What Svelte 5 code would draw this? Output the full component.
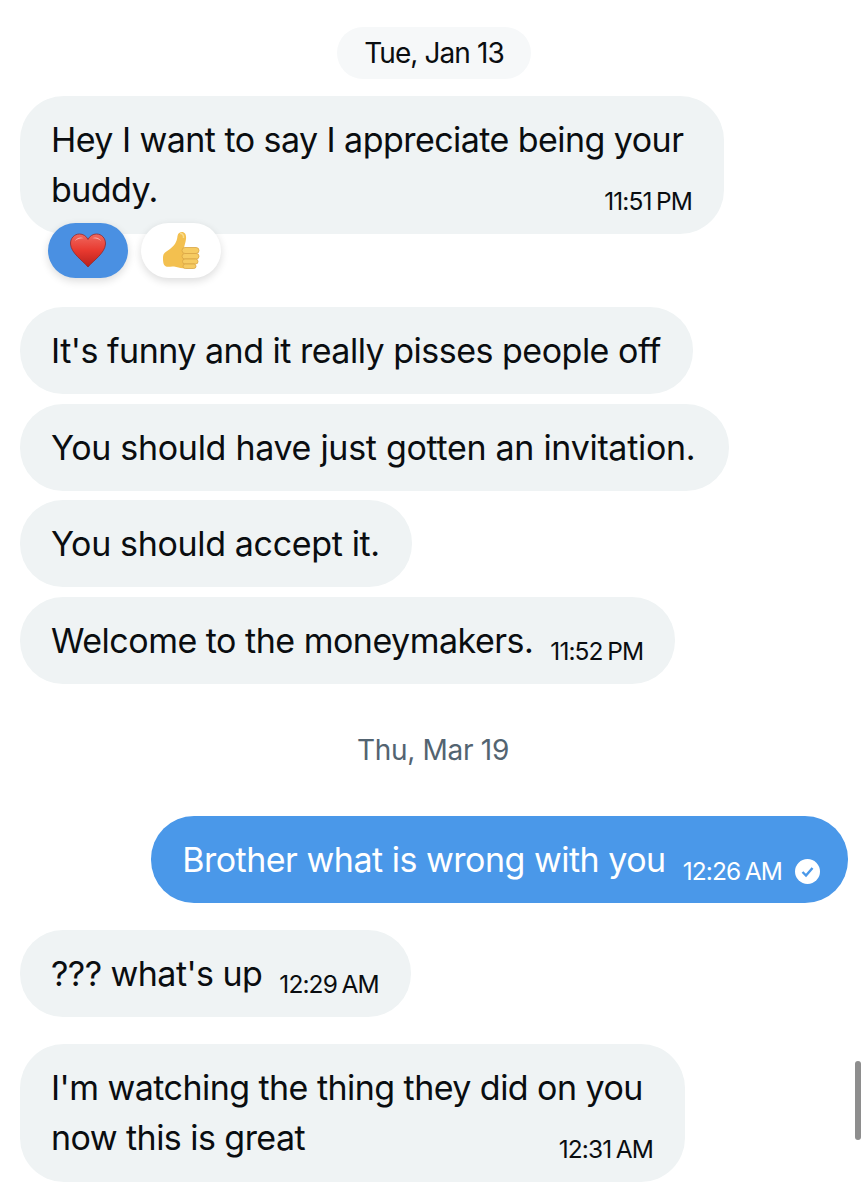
<script>
  const sent = '#4a98e9';
</script>

<main class="thread">
  <div class="date pill">Tue, Jan 13</div>

  <div class="bubble two first">
    <p>Hey I want to say I appreciate being your<br />buddy.</p>
    <span class="time">11:51 PM</span>
  </div>
  <div class="reactions">
    <span class="react mine">
      <svg width="36" height="36" viewBox="0 0 36 36" aria-hidden="true">
        <defs>
          <linearGradient id="heart" x1="0" y1="0" x2="0" y2="1">
            <stop offset="0" stop-color="#f0695f" />
            <stop offset="0.5" stop-color="#e8392f" />
            <stop offset="1" stop-color="#b8201c" />
          </linearGradient>
        </defs>
        <path d="M18 34C12 27 1 20 0.5 11 0.3 5 4.500 1 9.500 1 13 1 16.500 3 18 6.500 19.500 3 23 1 26.500 1 31.500 1 35.700 5 35.500 11 35 20 24 27 18 34Z" fill="url(#heart)" stroke="#8f2a2c" stroke-width="0.8" />
        <path d="M5 8C6.500 4.500 11 3.500 14 5.500 10.500 5 7.500 6 5 8ZM22 5.500C25 3.500 29.500 4.500 31 8 28.500 6 25.500 5 22 5.500Z" fill="#f9b3ab" />
      </svg>
    </span>
    <span class="react">
      <svg class="thumb" width="38" height="38" viewBox="0 0 38 38" aria-hidden="true">
        <path d="M1 25C1 21 5 19 8 17 12 14 15 10 15.500 4 16 1 18 0 20 0 23 0 24.500 3 24 7 23.700 10 22.500 13 22 16L23 36C19 37 16 35 12 34.500 9 34 6 35.500 4 34.500 1 33 1 29 1 25Z" fill="#f3c04f" />
        <path d="M18 1.500C20 1 22 3 21.500 6" fill="none" stroke="#f9dc8c" stroke-width="1.500" />
        <g fill="#f6cb62" stroke="#d9a544" stroke-width="0.8">
          <rect x="20" y="15.500" width="17" height="6" rx="3" />
          <rect x="20" y="21.500" width="17" height="5.500" rx="2.750" />
          <rect x="20.500" y="27" width="15.500" height="5" rx="2.500" />
          <rect x="21" y="32" width="13" height="4.500" rx="2.250" />
        </g>
      </svg>
    </span>
  </div>

  <div class="group">
    <div class="bubble"><p class="t1">It's funny and it really pisses people off</p></div>
    <div class="bubble"><p class="t3">You should have just gotten an invitation.</p></div>
    <div class="bubble"><p class="t2">You should accept it.</p></div>
    <div class="bubble"><p class="t1">Welcome to the moneymakers.</p><span class="time">11:52 PM</span></div>
  </div>

  <div class="date plain">Thu, Mar 19</div>

  <div class="bubble out" style:background={sent}>
    <p class="t1">Brother what is wrong with you</p>
    <span class="time">12:26 AM</span>
    <svg class="seen" width="25" height="25" viewBox="0 0 25 25" aria-hidden="true">
      <circle cx="12.500" cy="12.500" r="12.500" fill="#fff" />
      <path d="M7.500 13l3.500 3.500 6.500-7.500" fill="none" stroke={sent} stroke-width="2.400" />
    </svg>
  </div>

  <div class="bubble solo"><p>??? what's up</p><span class="time">12:29 AM</span></div>

  <div class="bubble two last">
    <p>I'm watching the thing they did on you<br />now this is great</p>
    <span class="time">12:31 AM</span>
  </div>

  <div class="scrollbar"></div>
</main>

<style>
  :global(body) {
    background: #fff;
  }
  .thread {
    position: relative;
    width: 868px;
    height: 1200px;
    overflow: hidden;
    box-sizing: border-box;
    padding: 27px 20px 0;
    display: flex;
    flex-direction: column;
    align-items: flex-start;
    font-family: Inter, "Liberation Sans", sans-serif;
    color: #0a0d10;
  }
  .date {
    align-self: center;
    font-size: 28px;
    line-height: 34px;
    letter-spacing: -0.3px;
  }
  .pill {
    background: #f6f8f9;
    border-radius: 26px;
    padding: 9px 27px;
    letter-spacing: -0.9px;
  }
  .plain {
    color: #536471;
    margin-top: 49px;
    margin-bottom: 49px;
    margin-left: -2px;
  }
  .bubble {
    display: flex;
    align-items: flex-end;
    box-sizing: border-box;
    height: 87px;
    padding: 0 32px 0 31px;
    background: #eff3f4;
    border-radius: 43px;
  }
  .bubble p {
    margin: 0;
    font-size: 34px;
    line-height: 50px;
    letter-spacing: -0.55px;
    padding-bottom: 18px;
    white-space: nowrap;
  }
  .bubble p.t1 {
    letter-spacing: -0.5px;
  }
  .bubble p.t2 {
    letter-spacing: -0.35px;
  }
  .bubble p.t3 {
    letter-spacing: -0.3px;
    padding-right: 2px;
  }
  .two {
    height: auto;
    border-radius: 44px;
  }
  .bubble.two p {
    flex: 1;
    min-width: 0;
    padding-bottom: 19px;
  }
  .first {
    margin-top: 17px;
    width: 704px;
    padding-top: 19px;
  }
  .last {
    margin-top: 27px;
    width: 665px;
    padding-top: 19px;
  }
  .time {
    flex: none;
    font-size: 24.500px;
    line-height: 28px;
    letter-spacing: -0.9px;
    word-spacing: -1.5px;
    padding-bottom: 19px;
    padding-left: 17px;
    white-space: nowrap;
  }
  .reactions {
    display: flex;
    gap: 13px;
    margin: -11px 0 0 28px;
    position: relative;
  }
  .react {
    width: 80px;
    height: 55px;
    border-radius: 28px;
    display: flex;
    align-items: center;
    justify-content: center;
    background: #fff;
    box-shadow: 0 3px 8px rgba(0, 0, 0, 0.14);
  }
  .mine {
    background: #4a90e2;
  }
  .group {
    display: flex;
    flex-direction: column;
    align-items: flex-start;
    gap: 9.700px;
    margin-top: 29px;
  }
  .out {
    align-self: flex-end;
    color: #fff;
    padding: 0 28px 0 31px;
  }
  .out .time {
    padding-bottom: 18px;
    padding-left: 17px;
  }
  .seen {
    margin: 0 0 19px 13px;
    flex: none;
  }
  .solo {
    margin-top: 27px;
  }
  .scrollbar {
    position: absolute;
    left: 855px;
    top: 1061px;
    width: 6px;
    height: 79px;
    border-radius: 3px;
    background: #8e8e8e;
  }
</style>
